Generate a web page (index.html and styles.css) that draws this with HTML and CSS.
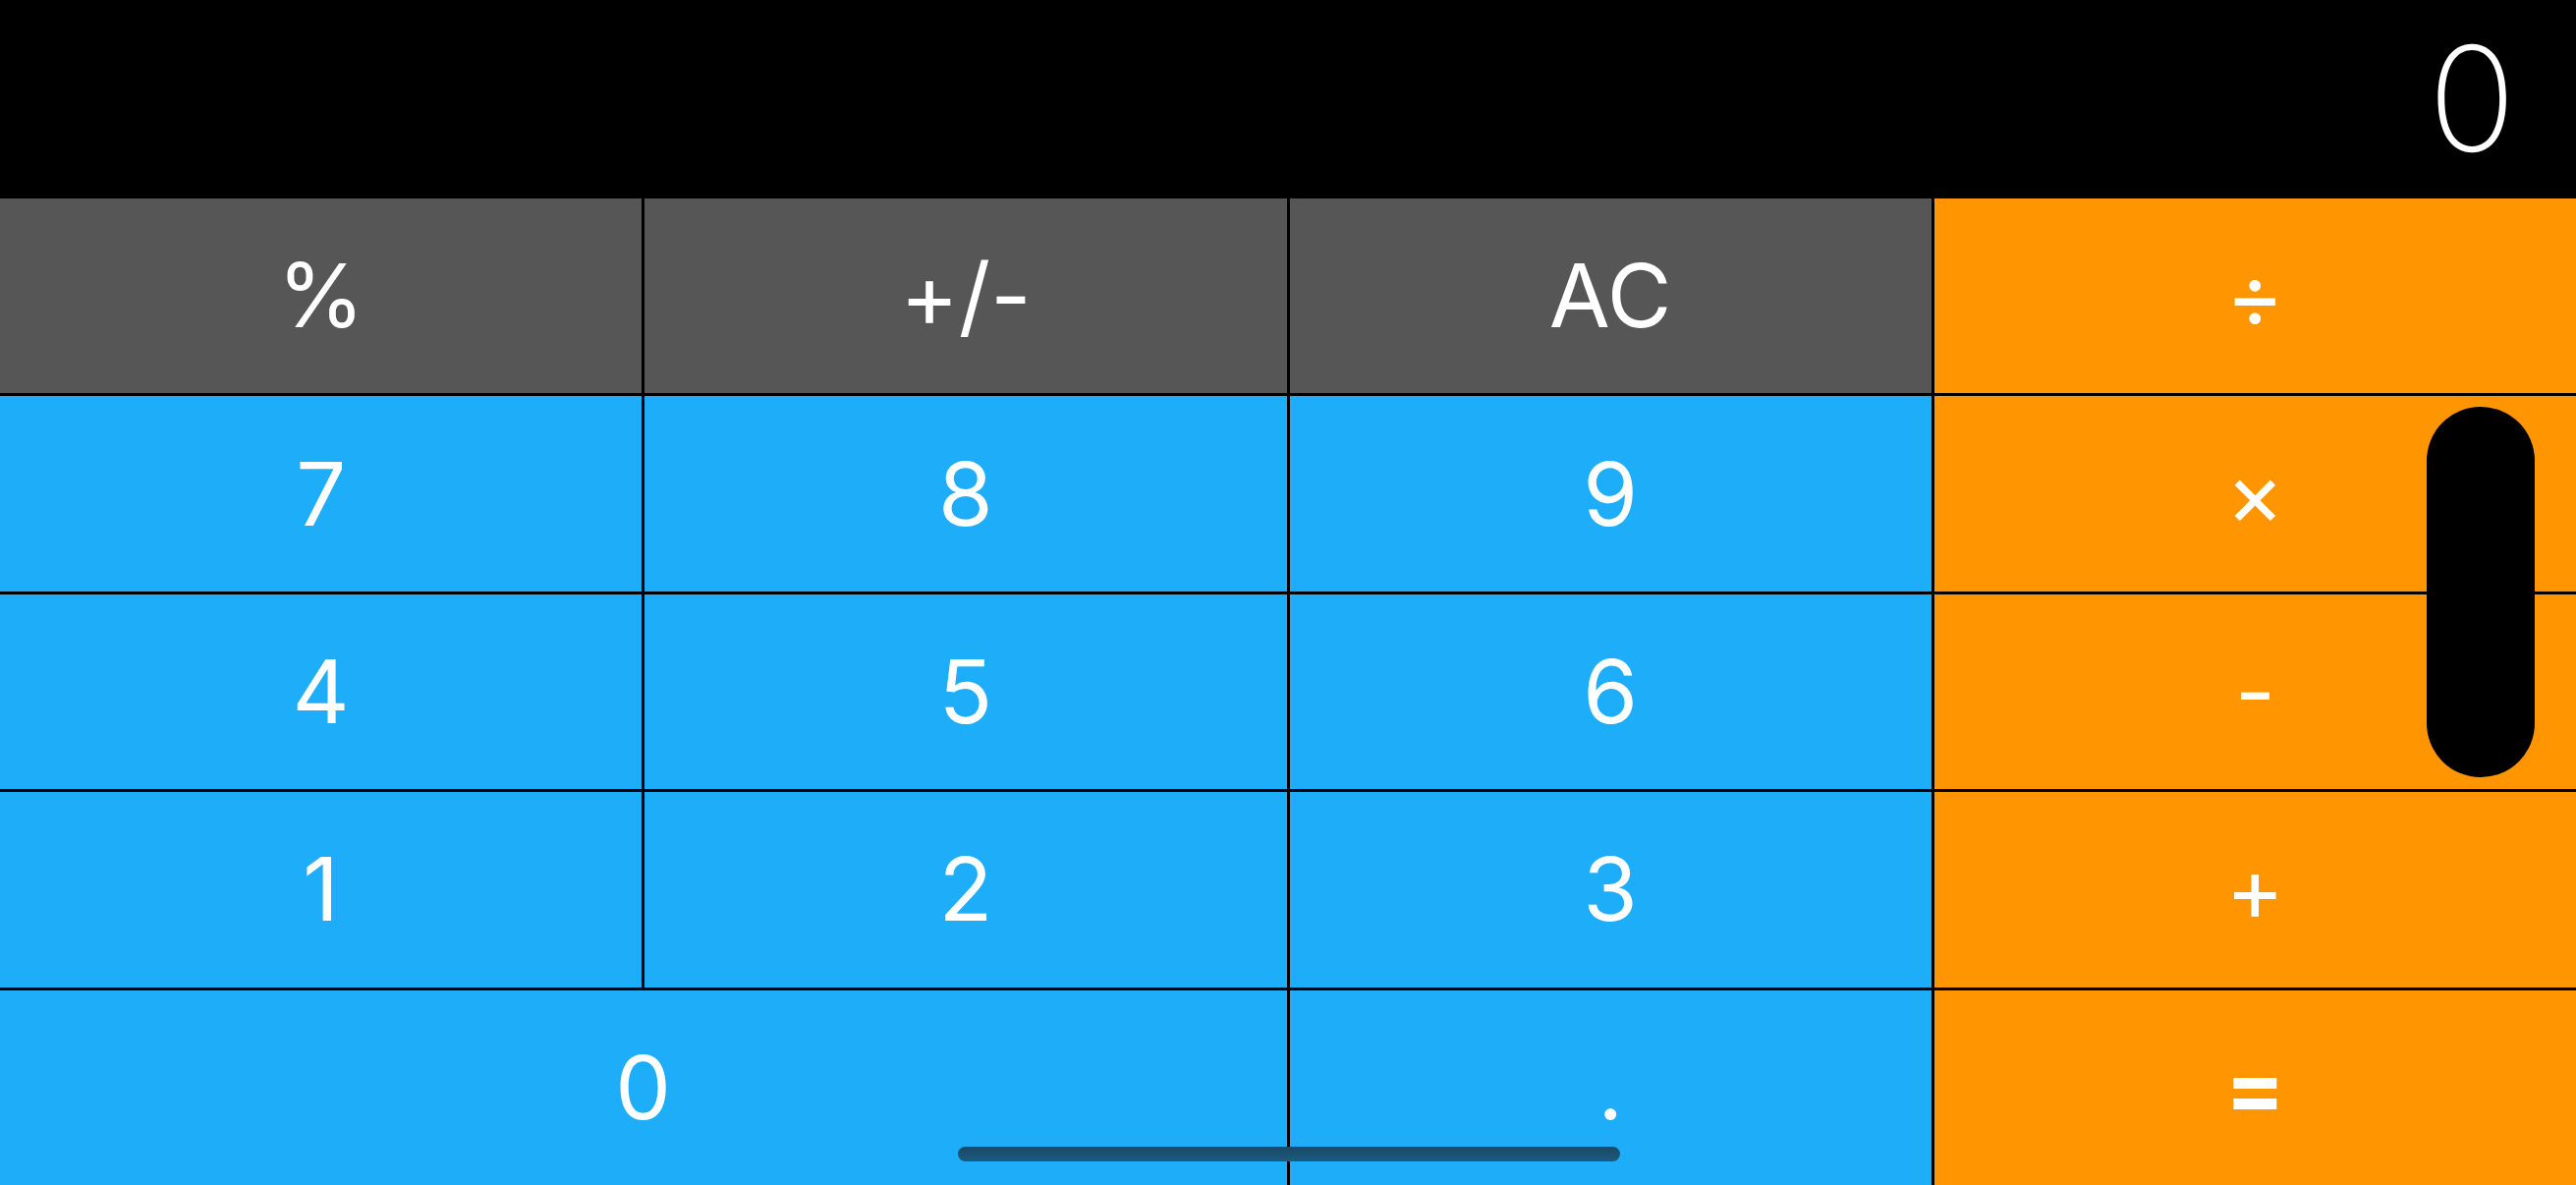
FILE: index.html
```html
<!DOCTYPE html>
<html lang="en">
<head>
<meta charset="utf-8">
<title>Calculator</title>
<link rel="stylesheet" href="styles.css">
</head>
<body>
<div class="calc">
  <div class="display"><span class="display-value">0</span></div>
  <div class="keys">
    <div class="key fn">%</div>
    <div class="key fn">+/-</div>
    <div class="key fn">AC</div>
    <div class="key op">÷</div>

    <div class="key num">7</div>
    <div class="key num">8</div>
    <div class="key num">9</div>
    <div class="key op">×</div>

    <div class="key num">4</div>
    <div class="key num">5</div>
    <div class="key num">6</div>
    <div class="key op">-</div>

    <div class="key num">1</div>
    <div class="key num">2</div>
    <div class="key num">3</div>
    <div class="key op">+</div>

    <div class="key num zero">0</div>
    <div class="key num">.</div>
    <div class="key op equals">=</div>
  </div>
  <div class="pill"></div>
  <div class="home-indicator"></div>
</div>
</body>
</html>
```
FILE: styles.css
```css
html, body {
  margin: 0;
  padding: 0;
  background: #000;
}

.calc {
  position: relative;
  width: 2622px;
  height: 1206px;
  overflow: hidden;
  font-family: Inter, "Noto Sans", sans-serif;
  color: #fff;
  display: flex;
  flex-direction: column;
}

.display {
  height: 202px;
  display: flex;
  align-items: center;
  justify-content: flex-end;
  padding-right: 61px;
  box-sizing: border-box;
}

.display-value {
  font-size: 148px;
  font-weight: 200;
  line-height: 1;
}

.keys {
  flex: 1;
  display: grid;
  grid-template-columns: repeat(4, 1fr);
  grid-template-rows: repeat(5, 1fr);
  gap: 3px;
}

.key {
  display: flex;
  align-items: center;
  justify-content: center;
  font-size: 90px;
  font-weight: 400;
  line-height: 1;
}

.fn {
  background: #565656;
}

.num {
  background: #1dadf9;
}

.op {
  background: #ff9500;
}

.zero {
  grid-column: span 2;
}

.equals {
  font-weight: 700;
}

.pill {
  position: absolute;
  left: 2470px;
  top: 414px;
  width: 110px;
  height: 377px;
  border-radius: 55px;
  background: #000;
}

.home-indicator {
  position: absolute;
  left: 975px;
  top: 1167px;
  width: 674px;
  height: 15px;
  border-radius: 8px;
  background: linear-gradient(#1a4965, #1d5a7e);
}
```
